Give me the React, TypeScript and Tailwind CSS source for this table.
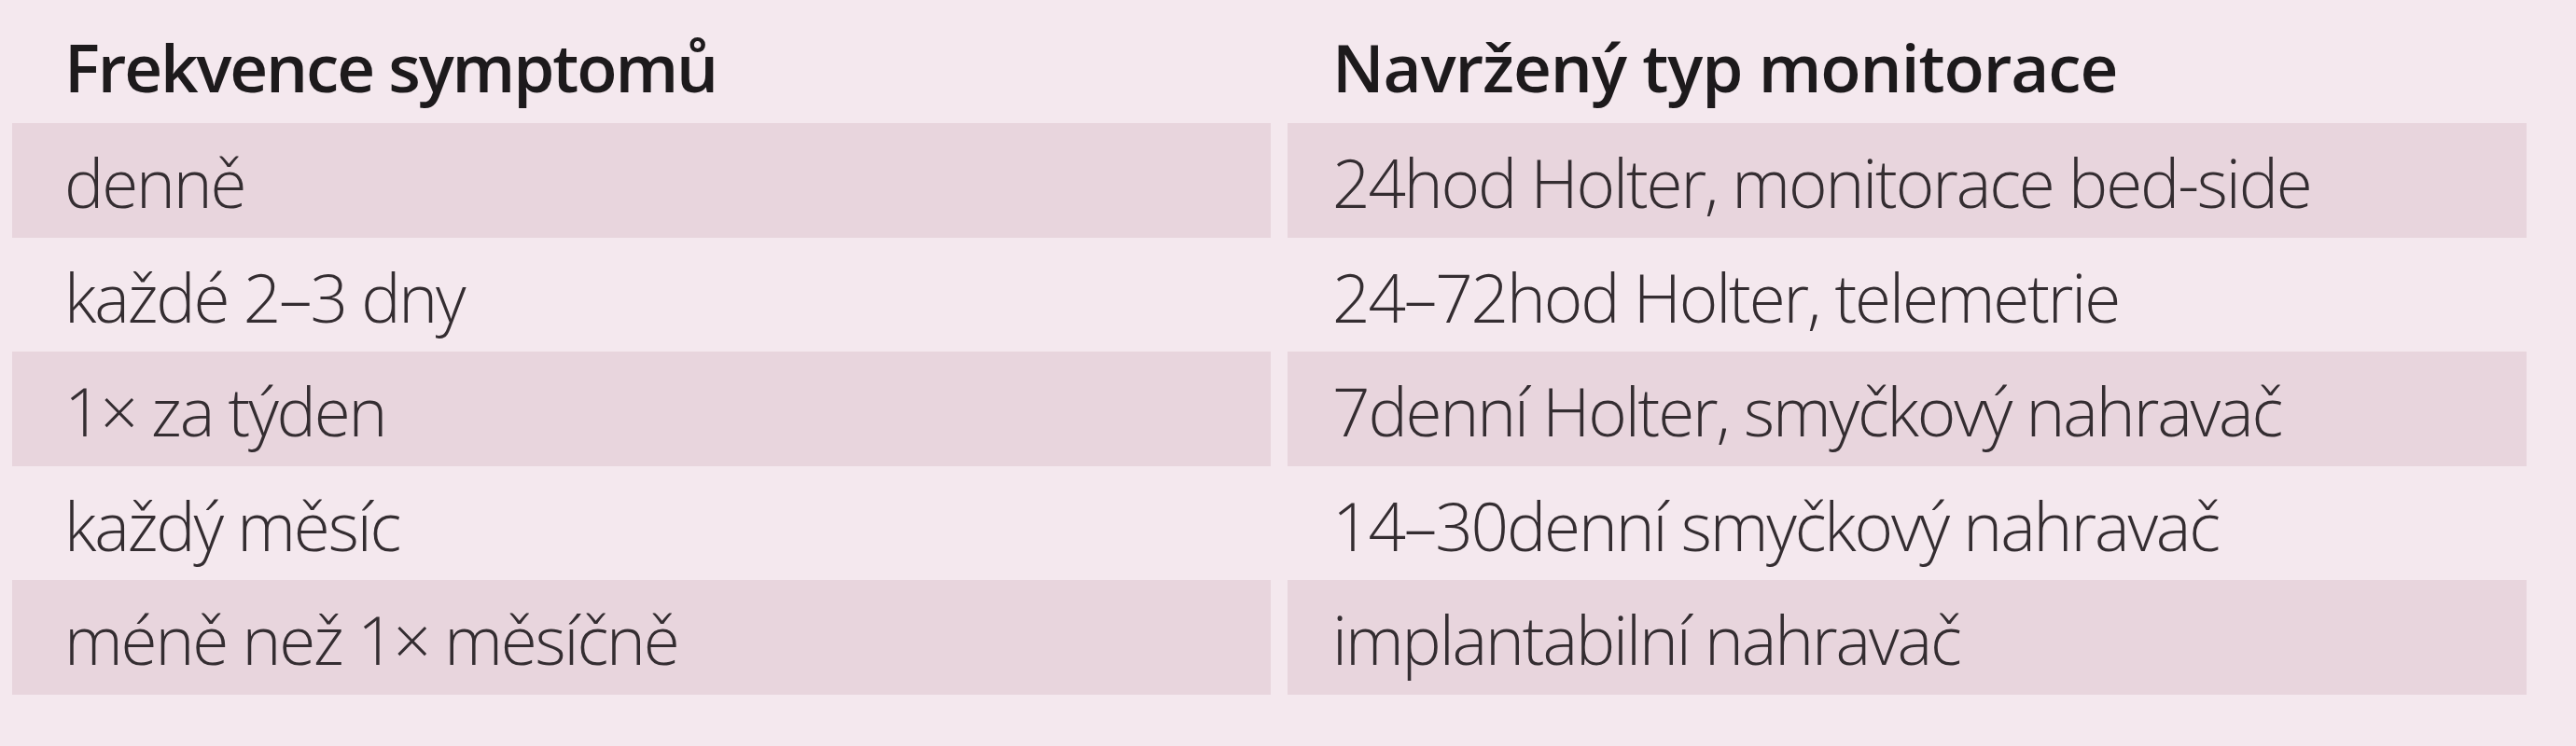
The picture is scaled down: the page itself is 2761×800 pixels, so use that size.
import React from "react";

const rows: [string, string][] = [
  ["denně", "24hod Holter, monitorace bed-side"],
  ["každé 2–3 dny", "24–72hod Holter, telemetrie"],
  ["1× za týden", "7denní Holter, smyčkový nahravač"],
  ["každý měsíc", "14–30denní smyčkový nahravač"],
  ["méně než 1× měsíčně", "implantabilní nahravač"],
];

export default function App() {
  return (
    <div className="w-[2761px] h-[800px] bg-[#f4e8ee] font-['Open_Sans',sans-serif] overflow-hidden">
      <div className="grid grid-cols-[1349px_1328px] gap-x-[18px] pl-[13px]">
        <div className="h-[132px] pt-[36px] pl-[56px] text-[71px] leading-[71px] font-semibold tracking-[-0.03em] text-[#1d1a1c] whitespace-nowrap">
          Frekvence symptomů
        </div>
        <div className="h-[132px] pt-[36px] pl-[48px] text-[71px] leading-[71px] font-semibold tracking-[-0.015em] text-[#1d1a1c] whitespace-nowrap">
          Navržený typ monitorace
        </div>
        {rows.map(([a, b], i) => (
          <React.Fragment key={i}>
            <div
              className={`h-[122.6px] pt-[28px] pl-[56px] text-[71px] leading-[71px] font-light tracking-[-0.03em] text-[#342d31] whitespace-nowrap ${
                i % 2 === 0 ? "bg-[#e8d5dd]" : ""
              }`}
            >
              {a}
            </div>
            <div
              className={`h-[122.6px] pt-[28px] pl-[48px] text-[71px] leading-[71px] font-light tracking-[-0.03em] text-[#342d31] whitespace-nowrap ${
                i % 2 === 0 ? "bg-[#e8d5dd]" : ""
              }`}
            >
              {b}
            </div>
          </React.Fragment>
        ))}
      </div>
    </div>
  );
}
